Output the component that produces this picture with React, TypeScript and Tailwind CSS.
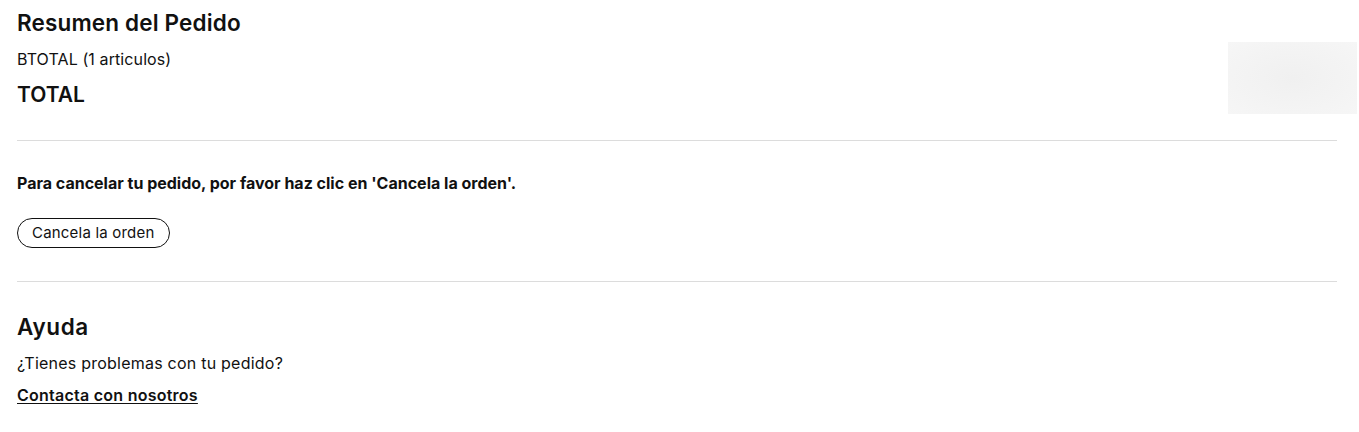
export default function App() {
  return (
    <div className="w-[1359px] h-[432px] bg-white text-[#111111] overflow-hidden" style={{ fontFamily: "Inter, 'Noto Sans', sans-serif" }}>
      <div className="pl-[17px] pr-[22px]">
        <h2 className="pt-2 text-[22.5px] leading-[30px] font-semibold tracking-[0.15px]">Resumen del Pedido</h2>
        <div className="mt-1 flex items-center justify-between">
          <div className="flex flex-col gap-[10px]">
            <p className="text-[16px] leading-[24px] tracking-[0.1px]">BTOTAL (1 articulos)</p>
            <p className="text-[21px] leading-[28px] font-semibold">TOTAL</p>
          </div>
          <div className="-mr-[20px] w-[129px] h-[72px] bg-[radial-gradient(ellipse_at_center,#f0f0f0,#f6f6f6)]" />
        </div>
        <hr className="mt-[26px] border-t border-[#dcdcdc]" />
        <p className="mt-[31px] text-[16px] leading-[22px] font-bold">Para cancelar tu pedido, por favor haz clic en 'Cancela la orden'.</p>
        <button className="mt-[24px] h-[30px] px-[14px] rounded-full border border-[#111111] text-[15px] leading-[20px] tracking-[0.2px] bg-white">Cancela la orden</button>
        <hr className="mt-[33px] border-t border-[#dcdcdc]" />
        <h2 className="mt-[30px] text-[22.5px] leading-[30px] font-semibold tracking-[0.6px]">Ayuda</h2>
        <p className="mt-[9px] text-[16px] leading-[24px] tracking-[0.23px]">¿Tienes problemas con tu pedido?</p>
        <a href="#" className="mt-[8px] block w-fit text-[16px] leading-[24px] font-semibold tracking-[0.25px] underline underline-offset-2">Contacta con nosotros</a>
      </div>
    </div>
  );
}
